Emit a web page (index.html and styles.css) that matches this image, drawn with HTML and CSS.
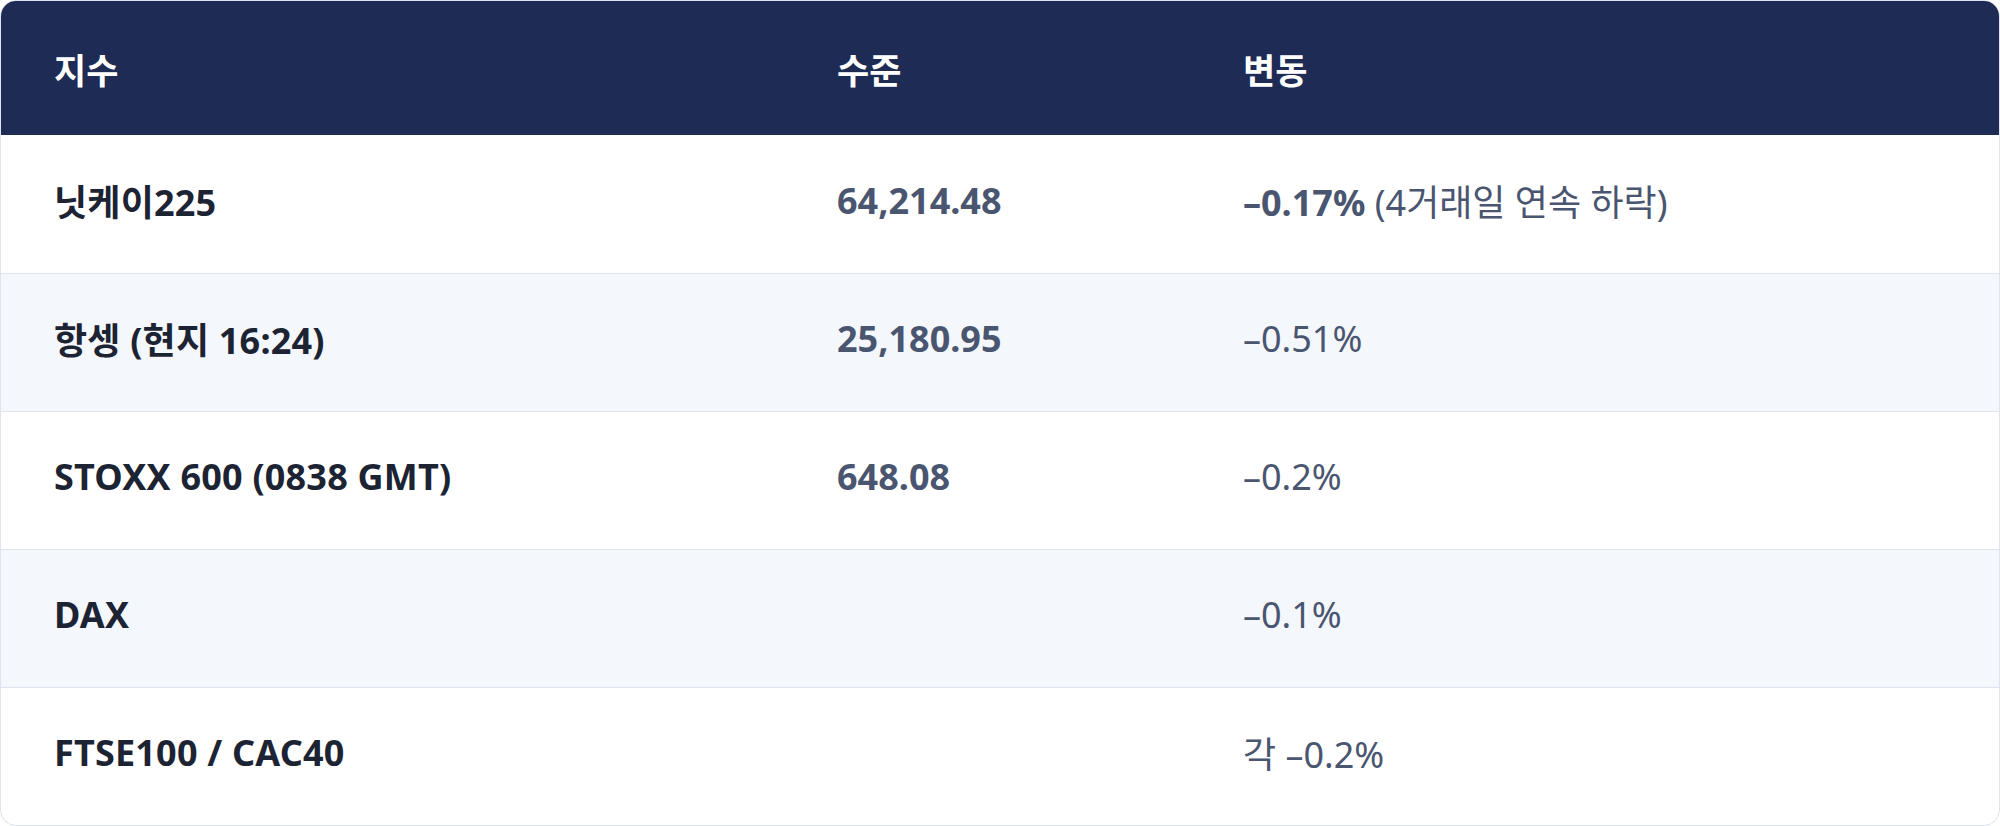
FILE: index.html
```html
<!DOCTYPE html>
<html lang="ko">
<head>
<meta charset="utf-8">
<link rel="stylesheet" href="styles.css">
</head>
<body>
<table class="idx">
  <colgroup>
    <col class="c1"><col class="c2"><col class="c3">
  </colgroup>
  <thead>
    <tr><th>지수</th><th>수준</th><th>변동</th></tr>
  </thead>
  <tbody>
    <tr><td class="name">닛케이225</td><td class="lvl">64,214.48</td><td class="chg"><b>–0.17%</b> (4거래일 연속 하락)</td></tr>
    <tr class="alt"><td class="name">항셍 (현지 16:24)</td><td class="lvl">25,180.95</td><td class="chg">–0.51%</td></tr>
    <tr><td class="name">STOXX 600 (0838 GMT)</td><td class="lvl">648.08</td><td class="chg">–0.2%</td></tr>
    <tr class="alt"><td class="name">DAX</td><td class="lvl"></td><td class="chg">–0.1%</td></tr>
    <tr><td class="name">FTSE100 / CAC40</td><td class="lvl"></td><td class="chg">각 –0.2%</td></tr>
  </tbody>
</table>
</body>
</html>
```
FILE: styles.css
```css
html, body {
  margin: 0;
  padding: 0;
  background: #ffffff;
}
body {
  font-family: "Noto Sans", "Noto Sans CJK KR", sans-serif;
}
.idx {
  width: 2000px;
  table-layout: fixed;
  border-collapse: separate;
  border-spacing: 0;
  border: 1px solid #dde4f0;
  border-radius: 16px;
  overflow: hidden;
}
.c1 { width: 783px; }
.c2 { width: 406px; }
.c3 { width: auto; }
.idx th {
  background: #1e2b54;
  color: #ffffff;
  font-weight: 700;
  font-size: 35px;
  text-align: left;
  height: 134px;
  padding: 0 0 0 53px;
  box-sizing: border-box;
}
.idx td {
  height: 138px;
  box-sizing: border-box;
  padding: 0 0 8px 53px;
  font-size: 36px;
  border-top: 1px solid #dde4f0;
}
.idx tbody tr:first-child td { border-top: none; }
.alt td { background: #f4f7fc; }
.name { color: #1c2333; font-weight: 700; letter-spacing: 0.2px; }
.lvl { color: #4a5570; font-weight: 700; }
.chg { color: #4a5570; font-weight: 400; }
.chg b { font-weight: 700; }
```
